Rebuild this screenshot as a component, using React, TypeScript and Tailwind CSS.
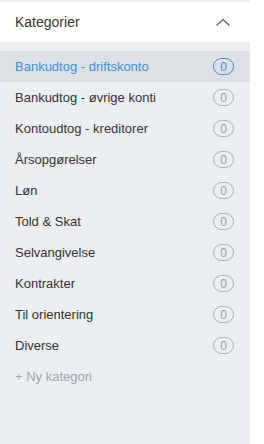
const CATEGORIES = [
  "Bankudtog - driftskonto",
  "Bankudtog - øvrige konti",
  "Kontoudtog - kreditorer",
  "Årsopgørelser",
  "Løn",
  "Told & Skat",
  "Selvangivelse",
  "Kontrakter",
  "Til orientering",
  "Diverse",
];

function CountBadge({ count, active }: { count: number; active?: boolean }) {
  return (
    <span
      className={`flex h-[17px] w-[21px] items-center justify-center rounded-full border text-[12px] leading-none ${
        active ? "border-[#3d8fe0] text-[#3d8fe0]" : "border-[#a9adb1] text-[#959a9f]"
      }`}
    >
      {count}
    </span>
  );
}

export default function App() {
  const selected = 0;

  return (
    <div className="flex h-[444px] w-[264px] bg-white font-['Liberation_Sans',Arial,sans-serif]">
      <aside className="flex w-[250px] flex-col bg-[#eceff2] pt-[2px]">
        <div className="flex h-[40px] items-center justify-between bg-white pl-[15px] pr-[19px]">
          <span className="text-[14px] text-[#333]">Kategorier</span>
          {/* chevron up */}
          <svg width="16" height="9" viewBox="0 0 16 9" fill="none" className="text-[#555]">
            <polyline points="1.5,7.5 8,1.5 14.5,7.5" stroke="currentColor" strokeWidth="1.1" />
          </svg>
        </div>

        <ul className="mt-[9px] flex flex-col">
          {CATEGORIES.map((name, i) => (
            <li
              key={name}
              className={`flex h-[31px] items-center justify-between pl-[15px] pr-[16px] text-[13px] ${
                i === selected ? "bg-[#dde1e5] text-[#3d8fe0]" : "text-[#333]"
              }`}
            >
              <span>{name}</span>
              <CountBadge count={0} active={i === selected} />
            </li>
          ))}
        </ul>

        <button type="button" className="flex h-[31px] items-center pl-[15px] text-left text-[13px] text-[#9ea6ae]">
          + Ny kategori
        </button>
      </aside>
    </div>
  );
}
